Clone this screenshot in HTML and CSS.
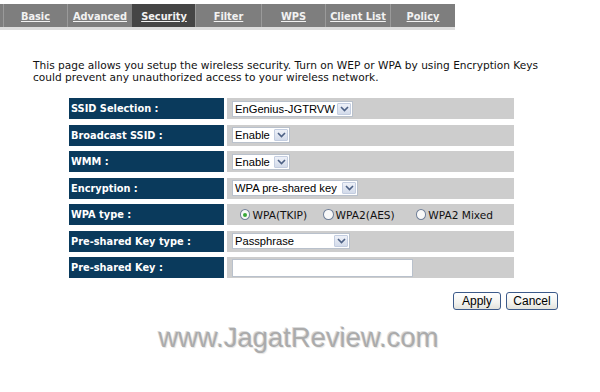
FILE: index.html
```html
<!DOCTYPE html>
<html>
<head>
<meta charset="utf-8">
<link rel="stylesheet" href="styles.css">
</head>
<body>
<div class="tabbar">
  <a class="tab t1">Basic</a>
  <a class="tab t2">Advanced</a>
  <a class="tab t3 active">Security</a>
  <a class="tab t4">Filter</a>
  <a class="tab t5">WPS</a>
  <a class="tab t6">Client List</a>
  <a class="tab t7 last">Policy</a>
</div>
<div class="strip"></div>

<p class="desc">This page allows you setup the wireless security. Turn on WEP or WPA by using Encryption Keys<br>could prevent any unauthorized access to your wireless network.</p>

<div class="form">
  <div class="lbl">SSID Selection :</div>
  <div class="val"><span class="sel w-ssid"><span class="txt">EnGenius-JGTRVW</span><span class="arr"><svg width="9" height="6" viewBox="0 0 9 6"><path d="M1 1 L4.5 4.5 L8 1" fill="none" stroke="#4d6185" stroke-width="1.6"/></svg></span></span></div>

  <div class="lbl">Broadcast SSID :</div>
  <div class="val"><span class="sel w-en"><span class="txt">Enable</span><span class="arr"><svg width="9" height="6" viewBox="0 0 9 6"><path d="M1 1 L4.5 4.5 L8 1" fill="none" stroke="#4d6185" stroke-width="1.6"/></svg></span></span></div>

  <div class="lbl">WMM :</div>
  <div class="val"><span class="sel w-en"><span class="txt">Enable</span><span class="arr"><svg width="9" height="6" viewBox="0 0 9 6"><path d="M1 1 L4.5 4.5 L8 1" fill="none" stroke="#4d6185" stroke-width="1.6"/></svg></span></span></div>

  <div class="lbl">Encryption :</div>
  <div class="val"><span class="sel w-enc"><span class="txt">WPA pre-shared key</span><span class="arr"><svg width="9" height="6" viewBox="0 0 9 6"><path d="M1 1 L4.5 4.5 L8 1" fill="none" stroke="#4d6185" stroke-width="1.6"/></svg></span></span></div>

  <div class="lbl">WPA type :</div>
  <div class="val radios">
    <span class="radio on"></span><span class="rtxt">WPA(TKIP)</span>
    <span class="radio"></span><span class="rtxt">WPA2(AES)</span>
    <span class="radio"></span><span class="rtxt">WPA2 Mixed</span>
  </div>

  <div class="lbl">Pre-shared Key type :</div>
  <div class="val"><span class="sel w-pp"><span class="txt">Passphrase</span><span class="arr"><svg width="9" height="6" viewBox="0 0 9 6"><path d="M1 1 L4.5 4.5 L8 1" fill="none" stroke="#4d6185" stroke-width="1.6"/></svg></span></span></div>

  <div class="lbl">Pre-shared Key :</div>
  <div class="val"><span class="input"></span></div>
</div>

<div class="buttons">
  <span class="btn apply">Apply</span>
  <span class="btn cancel">Cancel</span>
</div>

<div class="watermark">www.JagatReview.com</div>
</body>
</html>
```
FILE: styles.css
```css
html, body {
  margin: 0;
  padding: 0;
  background: #ffffff;
}
body {
  width: 600px;
  height: 392px;
  overflow: hidden;
  font-family: "DejaVu Sans", Verdana, sans-serif;
}
.tabbar {
  margin-top: 4px;
  width: 452px;
  height: 23px;
  padding-left: 3px;
  background: #7e7e7e;
  display: flex;
}
.tab {
  box-sizing: border-box;
  height: 23px;
  border-left: 1px solid #9a9a9a;
  color: #f2f2f2;
  font-weight: bold;
  font-size: 9.8px;
  text-decoration: underline;
  display: flex;
  align-items: center;
  justify-content: center;
  padding-top: 2px;
}
.t1 { width: 64px; }
.t2 { width: 65px; }
.t3 { width: 63px; }
.t4 { width: 66px; }
.t5 { width: 64px; }
.t6 { width: 65px; }
.t7 { width: 65px; }
.tab.active {
  background: #454545;
  border-left-color: #454545;
}
.strip {
  width: 455px;
  height: 3px;
  background: #dedede;
}
.desc {
  margin: 30px 0 0 33px;
  font-size: 10.6px;
  line-height: 11.5px;
  color: #111;
}
.form {
  margin: 15px 0 0 69px;
  display: grid;
  grid-template-columns: 155px 287px;
  grid-auto-rows: 21px;
  column-gap: 3px;
  row-gap: 5.5px;
}
.lbl {
  background: #0a3a5c;
  color: #ffffff;
  font-weight: bold;
  font-size: 9.8px;
  padding-left: 2px;
  display: flex;
  align-items: center;
}
.val {
  background: #cdcdcd;
  display: flex;
  align-items: center;
  padding-left: 5px;
}
.sel {
  box-sizing: border-box;
  height: 16px;
  background: #fff;
  border: 1px solid #b9c1cc;
  display: flex;
  align-items: stretch;
  font-family: "Liberation Sans", Arial, sans-serif;
  font-size: 11.2px;
  color: #000;
}
.sel .txt {
  flex: 1;
  padding-left: 2px;
  display: flex;
  align-items: center;
  white-space: nowrap;
}
.sel .arr {
  width: 12px;
  margin: 1px;
  background: linear-gradient(#eef1f8, #d3dbea);
  border: 1px solid #c3cde0;
  border-radius: 1px;
  display: flex;
  align-items: center;
  justify-content: center;
}
.w-ssid { width: 121px; }
.w-en { width: 58px; }
.w-enc { width: 126px; }
.w-pp { width: 118px; }
.radios {
  padding-left: 13px;
  font-size: 10.6px;
  color: #111;
}
.radio {
  box-sizing: border-box;
  width: 11px;
  height: 11px;
  border: 1px solid #6f7f99;
  border-radius: 50%;
  background: #f8f8f8;
  margin-right: 2px;
  display: flex;
  align-items: center;
  justify-content: center;
}
.radio.on::after {
  content: "";
  width: 4px;
  height: 4px;
  border-radius: 50%;
  background: #3aa83a;
}
.rtxt {
  margin-right: 21px;
  white-space: nowrap;
}
.rtxt:nth-of-type(2) { margin-right: 16px; }
.input {
  box-sizing: border-box;
  width: 181px;
  height: 18px;
  background: #fff;
  border: 1px solid #b9c1cc;
}
.buttons {
  margin-top: 14px;
  padding-right: 42px;
  display: flex;
  justify-content: flex-end;
  gap: 5px;
}
.btn {
  box-sizing: border-box;
  height: 18px;
  border: 1px solid #3c5a8a;
  border-radius: 3px;
  background: linear-gradient(#ffffff, #f3f3ef 60%, #e2e2dc);
  font-family: "Liberation Sans", Arial, sans-serif;
  font-size: 12px;
  color: #000;
  display: flex;
  align-items: center;
  justify-content: center;
}
.apply { width: 48px; }
.cancel { width: 52px; }
.watermark {
  margin-top: 12px;
  padding-right: 3px;
  text-align: center;
  font-family: "Liberation Sans", Arial, sans-serif;
  font-size: 27.4px;
  line-height: 32px;
  color: #ababab;
  text-shadow: 1px 1px 1px #e4e4e4, -1px -1px 0 #dadada;
}
```
